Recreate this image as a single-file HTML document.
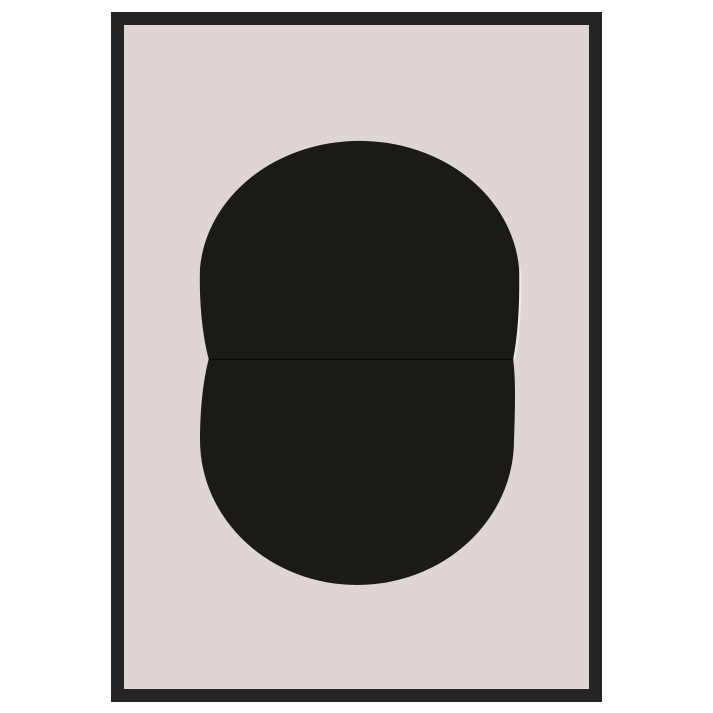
<!DOCTYPE html>
<html><head><style>
html,body{margin:0;padding:0;background:#fff;width:713px;height:713px;overflow:hidden}
</style></head><body>
<svg width="713" height="713" viewBox="0 0 713 713" xmlns="http://www.w3.org/2000/svg">
<rect x="0" y="0" width="713" height="713" fill="#fff"/>
<rect x="111" y="12" width="491" height="690" fill="#262424"/>
<rect x="124" y="25" width="465" height="664" fill="#ddd6d2"/>
<path d="M521,262 C522,300 520,340 515,359 L513,359 Z" fill="#f0ecea"/>
<path d="M209,360 C202,335 199,300 200,268 A160,138 0 0 1 519,268 C520,300 518,335 513,360 Z" fill="#1c1a17"/>
<path d="M209,358 C203,380 200,410 200,440 A157,145 0 0 0 514,440 C515,410 516,380 513,358 Z" fill="#1c1a17"/>
<line x1="209" y1="359.5" x2="513" y2="359.5" stroke="#0c0a08" stroke-width="1.5"/>
</svg>
</body></html>
